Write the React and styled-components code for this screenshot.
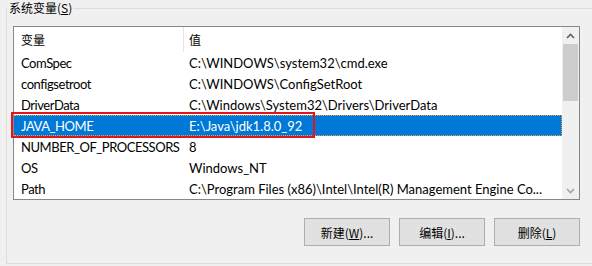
import React from 'react';
import styled, { createGlobalStyle } from 'styled-components';

const GlobalStyle = createGlobalStyle`
  html, body {
    margin: 0;
    padding: 0;
    background: #f0f0f0;
    overflow: hidden;
  }
  body {
    font-family: Lato, "Noto Sans CJK SC", sans-serif;
    font-size: 13px;
    color: #000;
  }
`;

const Page = styled.div`
  width: 592px;
  height: 266px;
  position: relative;
  overflow: hidden;
`;

const Group = styled.fieldset`
  margin: 0 0 0 6px;
  padding: 10px 0 15px 6px;
  width: 620px;
  height: 264px;
  box-sizing: border-box;
  border: 1px solid #dcdcdc;
  border-radius: 0;
`;

const Legend = styled.legend`
  padding: 0 1px 0 2px;
  margin-left: -6px;
  line-height: 16px;
  font-size: 12px;
  font-family: "Noto Sans CJK SC", sans-serif;
`;

const U = styled.span`
  text-decoration: underline;
  text-underline-offset: 1px;
`;

const ListBox = styled.div`
  width: 567px;
  height: 174px;
  box-sizing: border-box;
  border: 1px solid #828790;
  background: #fff;
  display: flex;
  position: relative;
`;

const ListBody = styled.div`
  flex: 1;
  overflow: hidden;
`;

const HeaderRow = styled.div`
  display: grid;
  grid-template-columns: 169px 1fr;
  height: 25px;
  align-items: center;
`;

const HeaderCell = styled.div`
  padding-left: ${p => (p.$first ? '7px' : '5px')};
  height: 100%;
  display: flex;
  align-items: center;
  border-left: ${p => (p.$first ? 'none' : '1px solid #e5e5e5')};
  font-family: "Noto Sans CJK SC", sans-serif;
  font-size: 12px;
  box-sizing: border-box;
`;

const Row = styled.div`
  display: grid;
  grid-template-columns: 169px 1fr;
  height: 21px;
  line-height: 19px;
  padding-top: 1px;
  align-items: center;
  box-sizing: border-box;
  background: ${p => (p.$selected ? '#0078d7' : 'transparent')};
  color: ${p => (p.$selected ? '#fff' : '#000')};
  border: 1px dotted ${p => (p.$selected ? '#f3a13a' : 'transparent')};
  border-left: none;
  white-space: nowrap;
`;

const NameCell = styled.div`
  padding-left: 7px;
  overflow: visible;
  letter-spacing: -0.45px;
`;

const ValueCell = styled.div`
  padding-left: 6px;
  overflow: hidden;
`;

const ScrollBar = styled.div`
  width: 17px;
  background: #f0f0f0;
  display: flex;
  flex-direction: column;
  align-items: center;
`;

const ArrowBox = styled.div`
  width: 17px;
  height: 17px;
  display: flex;
  align-items: center;
  justify-content: center;
`;

const Thumb = styled.div`
  width: 15px;
  height: 57px;
  background: #cdcdcd;
`;

const Track = styled.div`
  flex: 1;
`;

const Highlight = styled.div`
  position: absolute;
  left: -3px;
  top: 85px;
  width: 304px;
  height: 26px;
  box-sizing: border-box;
  border: 2px solid #e2141c;
  pointer-events: none;
`;

const Buttons = styled.div`
  display: flex;
  justify-content: flex-end;
  gap: 9px;
  width: 567px;
  margin-top: 18px;
`;

const Button = styled.button`
  width: 86px;
  height: 28px;
  background: #e1e1e1;
  border: 1px solid #adadad;
  font-family: "Noto Sans CJK SC", sans-serif;
  font-size: 12px;
  color: #000;
  padding: 0;
`;

const Chevron = ({ down }) => (
  <svg width="9" height="6" viewBox="0 0 9 6">
    <path
      d={down ? 'M1 1 L4.5 4.5 L8 1' : 'M1 5 L4.5 1.5 L8 5'}
      fill="none"
      stroke={down ? '#a3a3a3' : '#606060'}
      strokeWidth="1.6"
    />
  </svg>
);

const vars = [
  ['ComSpec', 'C:\\WINDOWS\\system32\\cmd.exe'],
  ['configsetroot', 'C:\\WINDOWS\\ConfigSetRoot'],
  ['DriverData', 'C:\\Windows\\System32\\Drivers\\DriverData'],
  ['JAVA_HOME', 'E:\\Java\\jdk1.8.0_92'],
  ['NUMBER_OF_PROCESSORS', '8'],
  ['OS', 'Windows_NT'],
  ['Path', 'C:\\Program Files (x86)\\Intel\\Intel(R) Management Engine Co...'],
];

const App = () => (
  <Page>
    <GlobalStyle />
    <Group>
      <Legend>
        系统变量(<U>S</U>)
      </Legend>
      <ListBox>
        <ListBody>
          <HeaderRow>
            <HeaderCell $first>变量</HeaderCell>
            <HeaderCell>值</HeaderCell>
          </HeaderRow>
          {vars.map(([name, value]) => (
            <Row key={name} $selected={name === 'JAVA_HOME'}>
              <NameCell>{name}</NameCell>
              <ValueCell>{value}</ValueCell>
            </Row>
          ))}
        </ListBody>
        <ScrollBar>
          <ArrowBox>
            <Chevron />
          </ArrowBox>
          <Thumb />
          <Track />
          <ArrowBox>
            <Chevron down />
          </ArrowBox>
        </ScrollBar>
        <Highlight />
      </ListBox>
      <Buttons>
        <Button>
          新建(<U>W</U>)...
        </Button>
        <Button>
          编辑(<U>I</U>)...
        </Button>
        <Button>
          删除(<U>L</U>)
        </Button>
      </Buttons>
    </Group>
  </Page>
);

export default App;
